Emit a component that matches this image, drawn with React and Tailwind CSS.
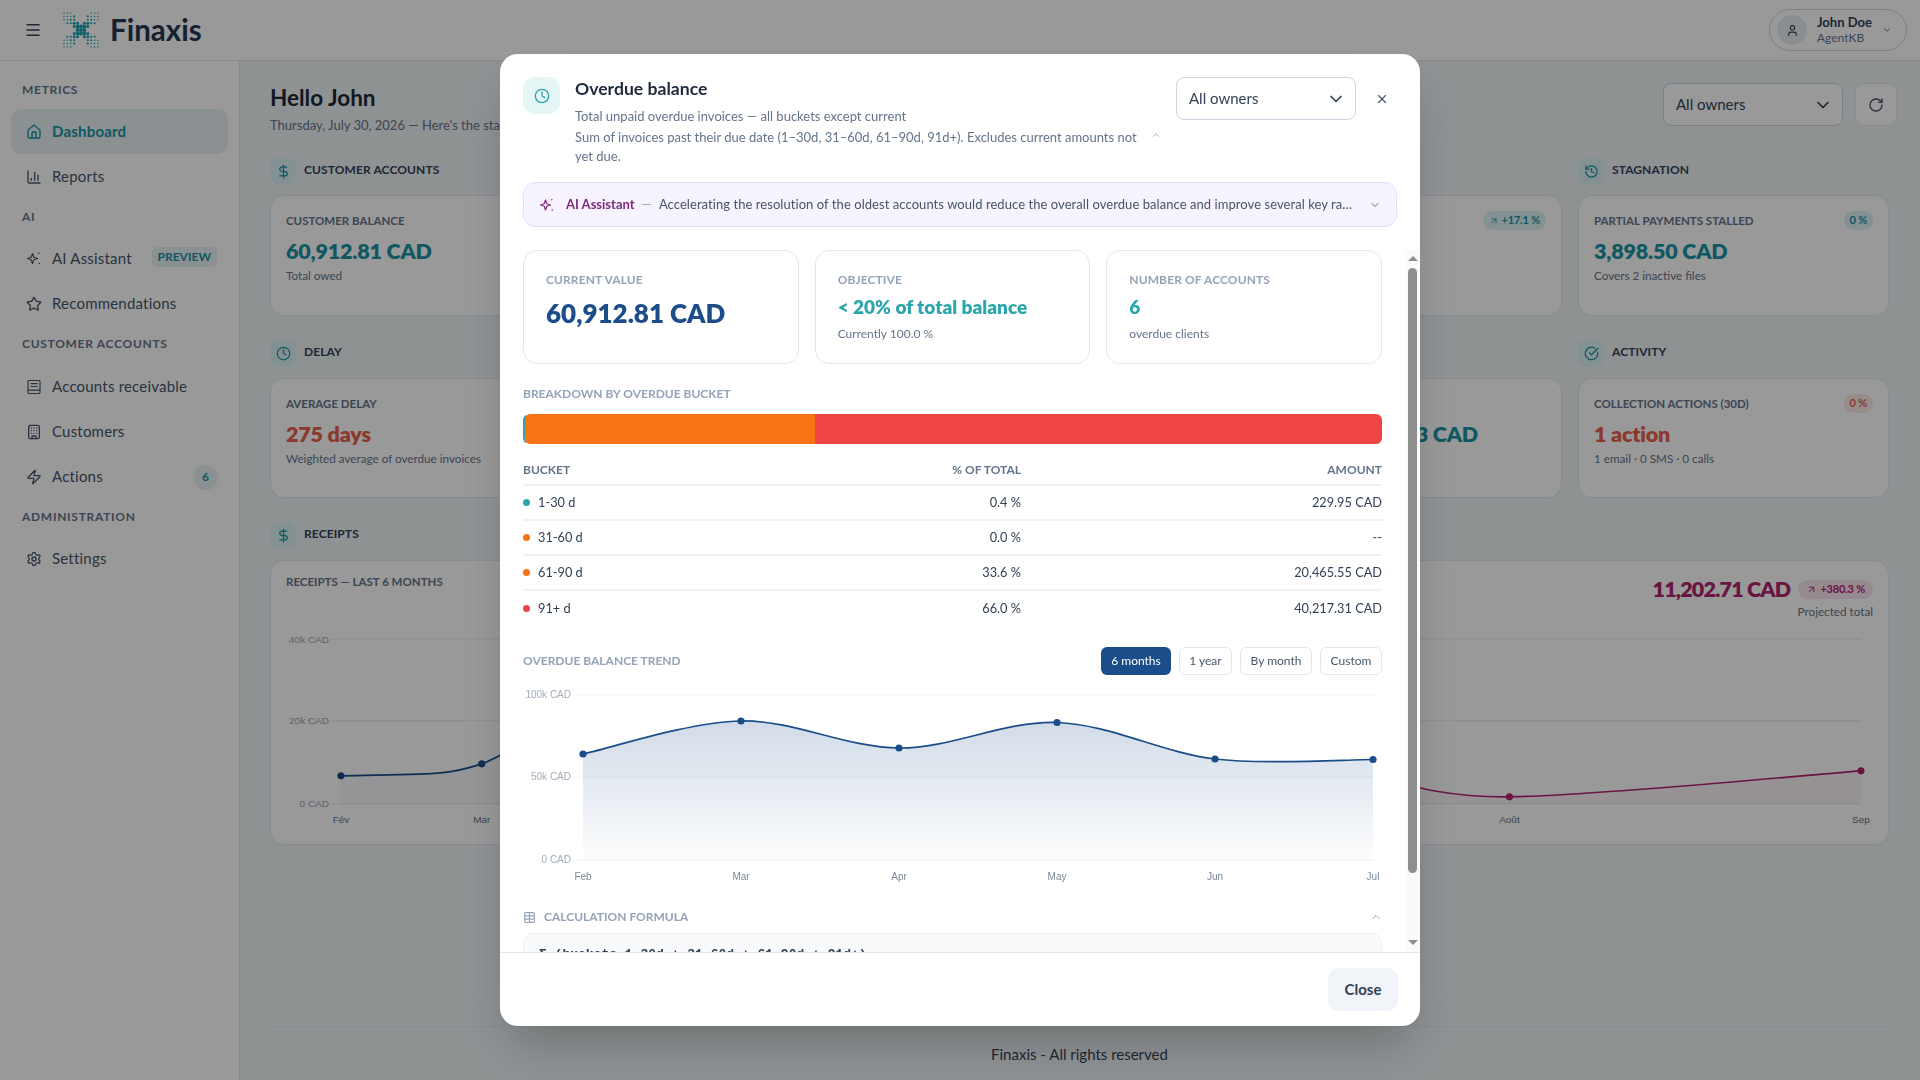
import {
  ArrowUpRight,
  Building,
  ChartColumn,
  ChevronDown,
  ChevronUp,
  CircleCheckBig,
  Clock,
  DollarSign,
  History,
  House,
  Menu,
  RotateCw,
  Settings,
  Star,
  Table,
  User,
  X,
  Zap,
} from "lucide-react"

// catmull-rom through the points, close enough to what the chart lib draws
const smooth = (pts) => {
  let d = `M${pts[0][0]} ${pts[0][1]}`
  for (let i = 0; i < pts.length - 1; i++) {
    const p0 = pts[i - 1] || pts[i]
    const p1 = pts[i]
    const p2 = pts[i + 1]
    const p3 = pts[i + 2] || p2
    d += ` C${p1[0] + (p2[0] - p0[0]) / 6} ${p1[1] + (p2[1] - p0[1]) / 6} ${p2[0] - (p3[0] - p1[0]) / 6} ${p2[1] - (p3[1] - p1[1]) / 6} ${p2[0]} ${p2[1]}`
  }
  return d
}

function Logo() {
  const dots = []
  for (let y = -5; y <= 5; y++) {
    for (let x = -5; x <= 5; x++) {
      const off = Math.min(Math.abs(x - y), Math.abs(x + y))
      const dist = Math.sqrt(x * x + y * y)
      if (dist > 7.2) continue
      if (off > 2 || (off === 2 && dist < 4)) continue
      const r = dist < 2 ? 2 : dist < 3.2 ? 1.5 : dist < 5 ? 1.05 : 0.75
      dots.push(<circle key={`${x}${y}`} cx={19 + x * 3.4} cy={18 + y * 3.4} r={r} fill="#22a5b5" />)
    }
  }
  return (
    <svg width="38" height="36" viewBox="0 0 38 36">
      {dots}
    </svg>
  )
}

function SparkIcon({ size = 17, className }) {
  return (
    <svg width={size} height={size} viewBox="0 0 16 16" fill="none" stroke="currentColor" strokeWidth="1.2" strokeLinejoin="round" className={className}>
      <path d="M6.5 3 L7.8 6.7 L11.5 8 L7.8 9.3 L6.5 13 L5.2 9.3 L1.5 8 L5.2 6.7 Z" />
      <circle cx="12.8" cy="2.8" r="0.8" fill="currentColor" stroke="none" />
      <circle cx="13.2" cy="13" r="0.8" fill="currentColor" stroke="none" />
    </svg>
  )
}

function LedgerIcon({ className }) {
  return (
    <svg width="16" height="16" viewBox="0 0 16 16" fill="none" stroke="currentColor" strokeWidth="1.2" className={className}>
      <rect x="2" y="1.5" width="12" height="13" rx="1" />
      <path d="M4.5 4.7h7M4.5 7.5h7M2 11.2h12" />
    </svg>
  )
}

function NavLabel({ children, className = "" }) {
  return <div className={`px-[22px] text-[12px] font-bold tracking-[0.7px] text-[#64748b] ${className}`}>{children}</div>
}

function NavItem({ icon, label, active, right }) {
  return (
    <div
      className={`mx-[11px] flex h-[45px] items-center rounded-[10px] pl-[15px] pr-[11px] text-[15px] ${
        active ? "bg-[#e8f2f3] font-bold text-[#1a93a3]" : "text-[#475569]"
      }`}
    >
      <span className={`mr-[10px] flex w-[16px] justify-center ${active ? "text-[#1a93a3]" : "text-[#475569]"}`}>{icon}</span>
      <span className="tracking-[0.2px]">{label}</span>
      <span className="ml-auto flex">{right}</span>
    </div>
  )
}

function Sidebar() {
  return (
    <aside className="w-[240px] shrink-0 border-r border-[#e2e8f0] bg-white pt-[20px]">
      <NavLabel>METRICS</NavLabel>
      <div className="mt-[10px]">
        <NavItem active icon={<House size={16} />} label="Dashboard" />
        <NavItem icon={<ChartColumn size={16} />} label="Reports" />
      </div>
      <NavLabel className="mt-[9px]">AI</NavLabel>
      <div className="mt-[10px]">
        <NavItem
          icon={<SparkIcon />}
          label="AI Assistant"
          right={<span className="mb-[3px] rounded-[5px] bg-[#e8f2f3] px-[6px] py-[1px] text-[12px] font-bold text-[#1a93a3]">PREVIEW</span>}
        />
        <NavItem icon={<Star size={16} />} label="Recommendations" />
      </div>
      <NavLabel className="mt-[9px]">CUSTOMER ACCOUNTS</NavLabel>
      <div className="mt-[11px]">
        <NavItem icon={<LedgerIcon />} label="Accounts receivable" />
        <NavItem icon={<Building size={16} />} label="Customers" />
        <NavItem
          icon={<Zap size={16} />}
          label="Actions"
          right={<span className="flex h-[23px] w-[23px] items-center justify-center rounded-full bg-[#e8f2f3] text-[12px] font-bold text-[#1a93a3] shadow-sm">6</span>}
        />
      </div>
      <NavLabel className="mt-[9px]">ADMINISTRATION</NavLabel>
      <div className="mt-[10px]">
        <NavItem icon={<Settings size={16} />} label="Settings" />
      </div>
    </aside>
  )
}

function Header() {
  return (
    <header className="flex h-[61px] shrink-0 items-center border-b border-[#e2e8f0] bg-white pl-[24px] pr-[13px]">
      <Menu size={18} className="text-[#334155]" />
      <div className="ml-[20px]">
        <Logo />
      </div>
      <span className="ml-[10px] text-[29.5px] font-bold text-[#233650]">Finaxis</span>
      <div className="ml-auto flex h-[42px] w-[138px] items-center rounded-full border border-[#cbd5e1] pl-[7px] pr-[14px]">
        <span className="flex h-[30px] w-[30px] items-center justify-center rounded-full bg-[#e5edf2] text-[#334155]">
          <User size={13} />
        </span>
        <div className="ml-[10px] leading-[16px]">
          <div className="text-[13px] font-bold text-[#334155]">John Doe</div>
          <div className="text-[12px] text-[#64748b]">AgentKB</div>
        </div>
        <ChevronDown size={10} className="ml-auto text-[#475569]" />
      </div>
    </header>
  )
}

function SectionHead({ icon, title, className = "" }) {
  return (
    <div className={`flex h-[26px] items-center gap-[8px] ${className}`}>
      <span className="flex h-[26px] w-[26px] items-center justify-center rounded-[8px] bg-[#dcf2f5] text-[#1a93a3]">{icon}</span>
      <span className="pb-[2px] text-[12px] font-bold tracking-[0.1px] text-[#334155]">{title}</span>
    </div>
  )
}

function KpiCard({ title, value, sub, badge, valueColor = "text-[#1a93a3]", className = "" }) {
  return (
    <div className={`h-[120px] rounded-[14px] border border-[#e2e8f0] bg-white px-[15px] pt-[16px] ${className}`}>
      <div className="flex h-[17px] items-center justify-between">
        <span className="whitespace-nowrap text-[11.5px] font-bold text-[#64748b]">{title}</span>
        {badge}
      </div>
      <div className={`mt-[6px] text-[21.5px] font-extrabold leading-[32px] tracking-[-0.2px] ${valueColor}`}>{value}</div>
      <div className="whitespace-nowrap text-[11.7px] text-[#64748b]">{sub}</div>
    </div>
  )
}

const Pill = ({ className, children }) => (
  <span className={`flex h-[19px] items-center gap-[3px] rounded-full px-[6px] text-[11px] font-bold tracking-[-0.2px] ${className}`}>{children}</span>
)

function ReceiptsChart() {
  const blue = "M70 142 C110 141 150 141 170 139 C190 137 205 132 211 130 C220 127 228 122 240 116"
  const red = [[1100, 141], [1240, 163], [1592, 137]]
  return (
    <svg viewBox="0 0 1619 205" className="mt-[13px] block w-full [font-family:'Liberation_Sans',sans-serif]">
      {[5, 87, 170].map((y) => (
        <line key={y} x1="60" x2="1592" y1={y} y2={y} stroke="#e5e7eb" />
      ))}
      {[["40k CAD", 8.5], ["20k CAD", 90.5], ["0 CAD", 173.5]].map(([t, y]) => (
        <text key={t} x="58" y={y} textAnchor="end" fontSize="10" fill="#9ca3af">{t}</text>
      ))}
      <path d={`${blue} L240 170 L70 170 Z`} fill="#1a4d8a" fillOpacity="0.04" />
      <path d={blue} fill="none" stroke="#1a4d8a" strokeWidth="1.7" />
      <path d={`${smooth(red)} L1592 170 L1100 170 Z`} fill="#b0236f" fillOpacity="0.04" />
      <path d={smooth(red)} fill="none" stroke="#b0236f" strokeWidth="1.7" />
      {[[70, 142], [211, 130]].map(([x, y]) => <circle key={x} cx={x} cy={y} r="3.6" fill="#1a4d8a" />)}
      {red.slice(1).map(([x, y]) => <circle key={x} cx={x} cy={y} r="3.6" fill="#b0236f" />)}
      {[["Fév", 70], ["Mar", 211], ["Août", 1240], ["Sep", 1592]].map(([t, x]) => (
        <text key={t} x={x} y="189" textAnchor="middle" fontSize="10" fill="#6b7280">{t}</text>
      ))}
    </svg>
  )
}

function Dashboard() {
  return (
    <main className="min-w-0 flex-1 bg-[#edf3f6] pl-[30px] pr-[23px] pt-[22px]">
      <div className="flex h-[55px] items-start justify-between">
        <div>
          <h1 className="text-[22.5px] font-bold leading-[30px] text-[#1e293b]">Hello John</h1>
          <p className="mt-[3px] text-[13px] text-[#64748b]">Thursday, July 30, 2026 — Here's the state of your accounts</p>
        </div>
        <div className="flex gap-[12px]">
          <div className="flex h-[43px] w-[180px] items-center justify-between rounded-[8px] border border-[#cbd5e1] bg-white pl-[12px] pr-[9px] text-[15px] text-[#334155]">
            All owners
            <ChevronDown size={20} />
          </div>
          <div className="flex h-[43px] w-[42px] items-center justify-center rounded-[8px] border border-[#e2e8f0] bg-white text-[#475569]">
            <RotateCw size={16} />
          </div>
        </div>
      </div>

      <div className="mr-[8px] mt-[20px] grid grid-cols-5 gap-x-[16px]">
        <SectionHead className="col-span-4" icon={<DollarSign size={15} />} title="CUSTOMER ACCOUNTS" />
        <SectionHead icon={<History size={15} />} title="STAGNATION" />

        <KpiCard className="mt-[11px] !h-[121px]" title="CUSTOMER BALANCE" value="60,912.81 CAD" sub="Total owed" />
        <KpiCard className="mt-[11px] !h-[121px]" title="" value="" sub="" />
        <KpiCard className="mt-[11px] !h-[121px]" title="" value="" sub="" />
        <KpiCard
          className="mt-[11px] !h-[121px]"
          title=""
          value=""
          sub=""
          badge={<Pill className="ml-auto bg-[#dcf2f5] text-[#1a93a3]"><ArrowUpRight size={10} />+17.1 %</Pill>}
        />
        <KpiCard
          className="mt-[11px] !h-[121px]"
          title="PARTIAL PAYMENTS STALLED"
          value="3,898.50 CAD"
          sub="Covers 2 inactive files"
          badge={<Pill className="bg-[#dcf2f5] text-[#1a93a3]">0 %</Pill>}
        />

        <SectionHead className="col-span-4 mt-[24px]" icon={<Clock size={15} />} title="DELAY" />
        <SectionHead className="mt-[24px]" icon={<CircleCheckBig size={15} />} title="ACTIVITY" />

        <KpiCard className="mt-[12px]" title="AVERAGE DELAY" value="275 days" valueColor="text-[#e8604c]" sub="Weighted average of overdue invoices" />
        <KpiCard className="mt-[12px]" title="" value="" sub="" />
        <KpiCard className="mt-[12px]" title="" value="" sub="" />
        <KpiCard className="mt-[12px]" title="" value={<div className="pr-[68px] text-right">3 CAD</div>} sub="" />
        <KpiCard
          className="mt-[12px]"
          title="COLLECTION ACTIONS (30D)"
          value="1 action"
          valueColor="text-[#e8604c]"
          sub="1 email · 0 SMS · 0 calls"
          badge={<Pill className="bg-[#fbe9e5] text-[#e8604c]">0 %</Pill>}
        />

        <SectionHead className="col-span-5 mt-[24px]" icon={<DollarSign size={15} />} title="RECEIPTS" />
        <div className="col-span-5 mt-[12px] h-[285px] rounded-[14px] border border-[#e2e8f0] bg-white pt-[14px]">
          <div className="flex items-start justify-between px-[15px]">
            <span className="-mt-[2px] text-[11.5px] font-bold text-[#64748b]">RECEIPTS — LAST 6 MONTHS</span>
            <div className="flex flex-col items-end">
              <div className="flex items-center gap-[8px]">
                <span className="text-[21.5px] font-extrabold leading-[28px] tracking-[-0.8px] text-[#b0236f]">11,202.71 CAD</span>
                <Pill className="bg-[#f9e6ef] px-[8px] text-[#b0236f]"><ArrowUpRight size={11} />+380.3 %</Pill>
              </div>
              <span className="text-[11.7px] text-[#64748b]">Projected total</span>
            </div>
          </div>
          <ReceiptsChart />
        </div>
      </div>

      <footer className="mr-[8px] mt-[181px] border-t border-[#e2e8f0] pt-[16px] text-center text-[15px] text-[#334155]">
        Finaxis - All rights reserved
      </footer>
    </main>
  )
}

const trend = [
  [60, 69],
  [218, 36],
  [376, 63],
  [534, 37.5],
  [692, 74],
  [850, 74.5],
]

function TrendChart() {
  const line = smooth(trend)
  return (
    <svg width="859" height="200" viewBox="0 0 859 200" className="mt-[10px] block [font-family:'Liberation_Sans',sans-serif]">
      <defs>
        <linearGradient id="trendFill" x1="0" y1="0" x2="0" y2="1">
          <stop offset="0%" stopColor="#1a4d8a" stopOpacity="0.2" />
          <stop offset="100%" stopColor="#1a4d8a" stopOpacity="0.01" />
        </linearGradient>
      </defs>
      {[10, 92, 175].map((y) => (
        <line key={y} x1="52" x2="851" y1={y} y2={y} stroke="#eef1f5" />
      ))}
      {[["100k CAD", 12.5], ["50k CAD", 94.5], ["0 CAD", 177.5]].map(([t, y]) => (
        <text key={t} x="48" y={y} textAnchor="end" fontSize="10" fill="#a3acbb">{t}</text>
      ))}
      <path d={`${line} L850 175 L60 175 Z`} fill="url(#trendFill)" />
      <path d={line} fill="none" stroke="#1a4d8a" strokeWidth="1.7" />
      {trend.map(([x, y]) => (
        <circle key={x} cx={x} cy={y} r="3.6" fill="#1a4d8a" />
      ))}
      {["Feb", "Mar", "Apr", "May", "Jun", "Jul"].map((m, i) => (
        <text key={m} x={trend[i][0]} y="194.5" textAnchor="middle" fontSize="10" fill="#7c8798">{m}</text>
      ))}
    </svg>
  )
}

const buckets = [
  { name: "1-30 d", dot: "bg-[#2ba6ad]", pct: "0.4 %", amount: "229.95 CAD" },
  { name: "31-60 d", dot: "bg-[#f97316]", pct: "0.0 %", amount: "--" },
  { name: "61-90 d", dot: "bg-[#f97316]", pct: "33.6 %", amount: "20,465.55 CAD" },
  { name: "91+ d", dot: "bg-[#ef4444]", pct: "66.0 %", amount: "40,217.31 CAD" },
]

function StatCard({ label, children }) {
  return (
    <div className="h-[114px] rounded-[14px] border border-[#e2e8f0] bg-white px-[22px] pt-[21px]">
      <div className="text-[12px] font-bold leading-[16px] tracking-[0.1px] text-[#94a3b8]">{label}</div>
      {children}
    </div>
  )
}

// the page's native scrollbar doesn't show in the shot, so it is drawn
function Scrollbar() {
  return (
    <div className="flex w-[15px] shrink-0 flex-col items-center bg-[#fafafa] pb-[7px] pt-[6px]">
      <svg width="10" height="5" viewBox="0 0 10 5"><path d="M5 0 L10 5 L0 5 Z" fill="#8e8e8e" /></svg>
      <div className="mt-[7px] h-[605px] w-[9px] rounded-full bg-[#8e8e8e]" />
      <svg width="10" height="5" viewBox="0 0 10 5" className="mt-auto"><path d="M0 0 L10 0 L5 5 Z" fill="#8e8e8e" /></svg>
    </div>
  )
}

function Modal() {
  return (
    <div className="fixed inset-0 flex items-center justify-center bg-black/40">
      <div className="flex h-[972px] w-[920px] flex-col overflow-hidden rounded-[18px] bg-white shadow-2xl">
        <div className="flex pl-[23px] pr-[22px] pt-[23px]">
          <span className="flex h-[37px] w-[37px] shrink-0 items-center justify-center rounded-[12px] bg-[#e6f5f6] text-[#2ba6ad]">
            <Clock size={16} />
          </span>
          <div className="ml-[15px] w-[578px] shrink-0 pt-[1px]">
            <h2 className="text-[17.6px] font-bold leading-[22px] text-[#1e293b]">Overdue balance</h2>
            <p className="mt-[7px] text-[13px] leading-[18px] text-[#64748b]">Total unpaid overdue invoices — all buckets except current</p>
            <div className="mt-[3px] flex items-start">
              <p className="w-[565px] shrink-0 text-[13px] leading-[19px] text-[#64748b]">
                Sum of invoices past their due date (1–30d, 31–60d, 61–90d, 91d+). Excludes current amounts not yet due.
              </p>
              <ChevronUp size={10} className="ml-[11px] mt-[2px] shrink-0 text-[#94a3b8]" />
            </div>
          </div>
          <div className="ml-auto flex h-[43px] items-center">
            <div className="flex h-[43px] w-[180px] items-center justify-between rounded-[8px] border border-[#cbd5e1] pl-[12px] pr-[9px] text-[15px] text-[#334155]">
              All owners
              <ChevronDown size={20} />
            </div>
            <X size={14} className="ml-[19px] mr-[9px] text-[#475569]" />
          </div>
        </div>

        <div className="mx-[23px] mt-[16px] flex h-[45px] shrink-0 items-center rounded-[12px] border border-[#ead9fb] bg-[#f6f3fe] pl-[15px] pr-[15px] text-[13px]">
          <SparkIcon size={16} className="text-[#7e2a7e]" />
          <span className="ml-[11px] font-bold text-[#7e2a7e]">AI Assistant</span>
          <span className="mx-[7px] text-[#94a3b8]">—</span>
          <span className="min-w-0 flex-1 truncate tracking-[0.06px] text-[#475569]">
            Accelerating the resolution of the oldest accounts would reduce the overall overdue balance and improve several key ratios across the portfolio
          </span>
          <ChevronDown size={12} className="ml-[14px] shrink-0 text-[#64748b]" />
        </div>

        <div className="mt-[23px] flex min-h-0 flex-1">
          <div className="min-w-0 flex-1 overflow-hidden pl-[23px] pr-[23px]">
            <div className="grid grid-cols-3 gap-[16px]">
              <StatCard label="CURRENT VALUE">
                <div className="mt-[7px] text-[26px] font-extrabold leading-[36px] text-[#1a4d8a]">60,912.81 CAD</div>
              </StatCard>
              <StatCard label="OBJECTIVE">
                <div className="mt-[7px] text-[19px] font-extrabold leading-[24px] text-[#2ba6ad]">&lt; 20% of total balance</div>
                <div className="mt-[6px] text-[12px] text-[#64748b]">Currently 100.0 %</div>
              </StatCard>
              <StatCard label="NUMBER OF ACCOUNTS">
                <div className="mt-[7px] text-[19px] font-extrabold leading-[24px] text-[#2ba6ad]">6</div>
                <div className="mt-[6px] text-[12px] text-[#64748b]">overdue clients</div>
              </StatCard>
            </div>

            <div className="mt-[22px] text-[12px] font-bold leading-[16px] text-[#94a3b8]">BREAKDOWN BY OVERDUE BUCKET</div>
            <div className="mt-[12px] flex h-[30px] overflow-hidden rounded-[6px]">
              <div className="w-[3px] bg-[#2ba6ad]" />
              <div className="-ml-[1px] w-[290px] rounded-l-[5px] bg-[#f97316]" />
              <div className="flex-1 bg-[#ef4444]" />
            </div>

            <div className="mt-[17px] flex h-[25px] items-start border-b-2 border-[#eef1f5] text-[12px] font-bold leading-[18px] text-[#64748b]">
              <div className="flex w-[498px] justify-between">
                <span>BUCKET</span>
                <span>% OF TOTAL</span>
              </div>
              <span className="ml-auto">AMOUNT</span>
            </div>
            {buckets.map((b, i) => (
              <div
                key={b.name}
                className={`flex h-[35px] items-center text-[12.75px] text-[#334155] ${i < 3 ? "border-b-2 border-[#eef1f5]" : ""}`}
              >
                <div className="flex w-[498px] items-center">
                  <span className={`h-[7px] w-[7px] rounded-full ${b.dot}`} />
                  <span className="ml-[8px]">{b.name}</span>
                  <span className="ml-auto">{b.pct}</span>
                </div>
                <span className="ml-auto">{b.amount}</span>
              </div>
            ))}

            <div className="mt-[21px] flex h-[28px] items-center text-[12px]">
              <span className="font-bold text-[#94a3b8]">OVERDUE BALANCE TREND</span>
              <div className="ml-auto flex gap-[8px]">
                <span className="flex h-[28px] w-[70px] items-center justify-center rounded-[6px] bg-[#1a4d8a] text-white">6 months</span>
                <span className="flex h-[28px] w-[53px] items-center justify-center rounded-[6px] border border-[#e2e8f0] text-[#475569]">1 year</span>
                <span className="flex h-[28px] w-[72px] items-center justify-center rounded-[6px] border border-[#e2e8f0] text-[#475569]">By month</span>
                <span className="flex h-[28px] w-[62px] items-center justify-center rounded-[6px] border border-[#e2e8f0] text-[#475569]">Custom</span>
              </div>
            </div>

            <TrendChart />

            <div className="mt-[23px] flex h-[18px] items-center text-[12px] font-bold text-[#94a3b8]">
              <Table size={13} className="mr-[8px]" />
              CALCULATION FORMULA
              <ChevronUp size={12} className="ml-auto" />
            </div>
            <div className="mt-[7px] rounded-[10px] border border-[#eef1f5] bg-[#f8fafc] px-[15px] pb-[16px] pt-[11px] text-[13px] font-bold leading-[20px] text-[#334155] [font-family:'Liberation_Mono',monospace]">
              Σ (buckets 1-30d + 31-60d + 61-90d + 91d+)
            </div>
          </div>
          <Scrollbar />
        </div>

        <div className="flex h-[74px] shrink-0 items-center justify-end border-t border-[#e2e8f0] pr-[22px]">
          <span className="flex h-[43px] w-[70px] items-center justify-center rounded-[10px] bg-[#f1f5f9] text-[15px] font-bold text-[#334155]">Close</span>
        </div>
      </div>
    </div>
  )
}

export default function App() {
  return (
    <div className="flex h-[1080px] flex-col overflow-hidden [font-family:Lato,sans-serif]">
      <Header />
      <div className="flex min-h-0 flex-1">
        <Sidebar />
        <Dashboard />
      </div>
      <Modal />
    </div>
  )
}
